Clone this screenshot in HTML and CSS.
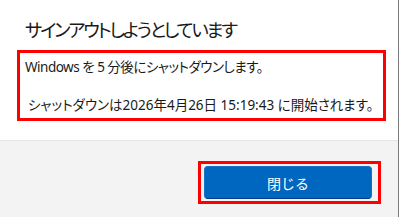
FILE: index.html
```html
<!DOCTYPE html>
<html lang="ja">
<head>
<meta charset="utf-8">
<link rel="stylesheet" href="styles.css">
</head>
<body>
<div class="dialog">
  <div class="content">
    <h1 class="title">サインアウトしようとしています</h1>
    <div class="highlight">
      <p class="msg msg-first">Windows を 5 分後にシャットダウンします。</p>
      <p class="msg msg-second">シャットダウンは2026年4月26日 15:19:43 に開始されます。</p>
    </div>
  </div>
  <div class="footer">
    <div class="btn-highlight">
      <button class="btn-primary">閉じる</button>
    </div>
  </div>
</div>
</body>
</html>
```
FILE: styles.css
```css
html, body {
  margin: 0;
  padding: 0;
  background: #ffffff;
}
body {
  width: 400px;
  height: 217px;
  overflow: hidden;
  font-family: "Noto Sans", "Noto Sans CJK JP", sans-serif;
  font-feature-settings: "palt";
  color: #1a1a1a;
}
.dialog {
  width: 398px;
  height: 217px;
  border-right: 1px solid #7a7a7a;
  display: flex;
  flex-direction: column;
}
.content {
  height: 140px;
  box-sizing: border-box;
  padding: 16px 0 0 17px;
  background: #ffffff;
}
.title {
  margin: 0 0 6px 8px;
  font-size: 18.5px;
  font-weight: normal;
  line-height: 28px;
  letter-spacing: -2.3px;
}
.highlight {
  box-sizing: border-box;
  width: 369px;
  height: 71px;
  border: 3px solid #ff0000;
  padding: 4px 0 0 5px;
}
.msg {
  margin: 0;
  font-size: 13.5px;
  line-height: 20px;
  white-space: nowrap;
}
.msg-first {
  letter-spacing: -0.5px;
}
.msg-second {
  margin-top: 18px;
  padding-left: 3px;
}
.footer {
  flex: 1;
  background: #f3f3f3;
  border-top: 1px solid #e5e5e5;
  display: flex;
  justify-content: flex-end;
  align-items: flex-start;
  padding: 20px 17px 0 0;
}
.btn-highlight {
  border: 3px solid #ff0000;
  padding: 2px 6px 2px 3px;
  display: flex;
}
.btn-primary {
  width: 168px;
  height: 33px;
  box-sizing: border-box;
  background: #0067c0;
  border: 1px solid #1473c7;
  border-bottom-color: #003e92;
  border-radius: 4px;
  color: #ffffff;
  font-family: "Noto Sans CJK JP", sans-serif;
  font-size: 14px;
  padding: 0;
  line-height: 30px;
}
```
